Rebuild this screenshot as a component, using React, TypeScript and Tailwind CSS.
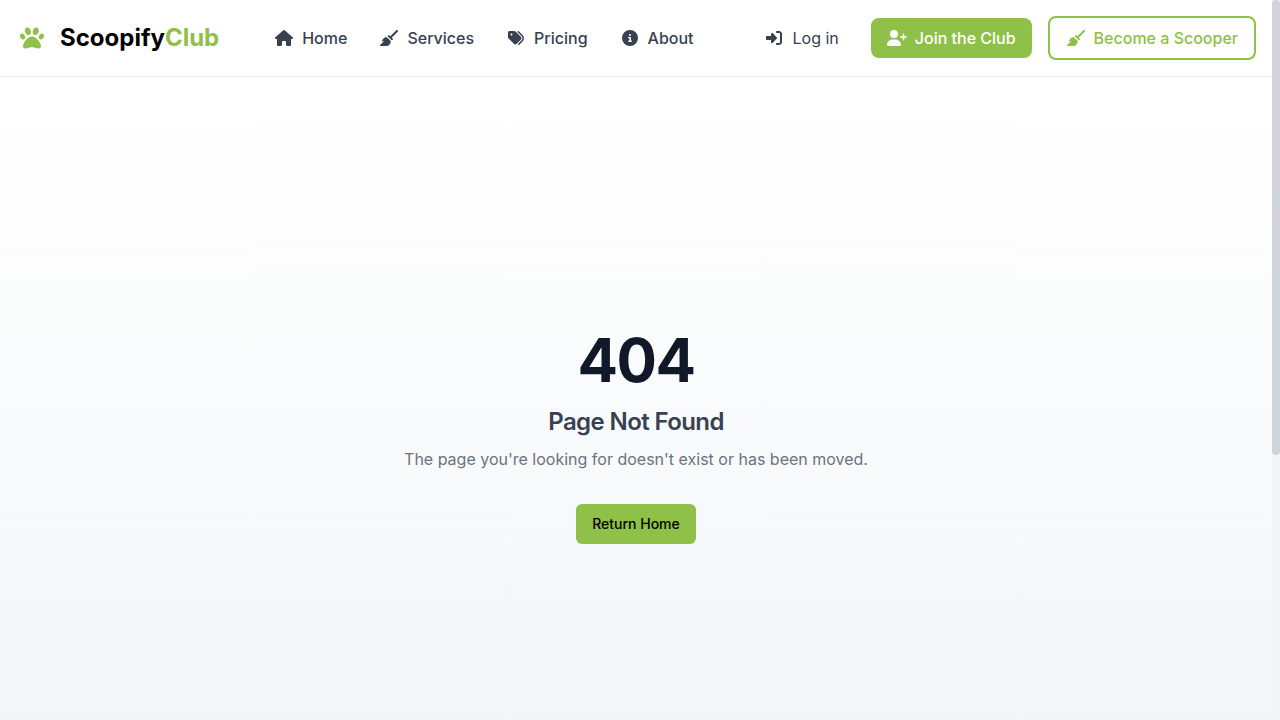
import type { ComponentType } from "react";
import {
  FaBroom,
  FaCircleInfo,
  FaHouse,
  FaPaw,
  FaRightToBracket,
  FaTags,
  FaUserPlus,
} from "react-icons/fa6";

type Icon = ComponentType<{ className?: string }>;

const navItems: { label: string; href: string; icon: Icon }[] = [
  { label: "Home", href: "/", icon: FaHouse },
  { label: "Services", href: "/services", icon: FaBroom },
  { label: "Pricing", href: "/pricing", icon: FaTags },
  { label: "About", href: "/about", icon: FaCircleInfo },
];

function FixedIcon({ icon: Glyph }: { icon: Icon }) {
  return (
    <span className="shrink-0" aria-hidden="true">
      <Glyph className="h-4 w-5" />
    </span>
  );
}

function Header() {
  return (
    <header className="flex items-center justify-between border-b border-gray-200 bg-white py-4 pr-4 pl-5">
      <a href="/" className="flex items-center gap-4 text-2xl font-bold text-black">
        <FaPaw className="size-6 text-[#8fc048]" aria-hidden="true" />
        <span>
          Scoopify<span className="text-[#8fc048]">Club</span>
        </span>
      </a>
      <nav className="flex items-center gap-8" aria-label="Main">
        {navItems.map(({ label, href, icon }) => (
          <a key={label} href={href} className="flex items-center gap-2 font-medium text-[#374151]">
            <FixedIcon icon={icon} />
            {label}
          </a>
        ))}
      </nav>
      <div className="flex items-center gap-4">
        <a href="/login" className="flex items-center gap-2 px-4 py-2 text-[#374151]">
          <FixedIcon icon={FaRightToBracket} />
          Log in
        </a>
        <a
          href="/join"
          className="flex items-center gap-2 rounded-lg bg-[#8fc048] px-4 py-2 font-medium text-white"
        >
          <FixedIcon icon={FaUserPlus} />
          Join the Club
        </a>
        <a
          href="/scooper"
          className="flex items-center gap-2 rounded-lg border-2 border-[#8fc048] px-4 py-2 font-medium text-[#8fc048]"
        >
          <FixedIcon icon={FaBroom} />
          Become a Scooper
        </a>
      </div>
    </header>
  );
}

export default function App() {
  return (
    <div className="flex h-screen overflow-hidden bg-white font-['Inter',sans-serif] text-base">
      <div className="min-w-0 flex-1">
        <Header />
        <main className="flex min-h-screen flex-col items-center justify-center bg-linear-to-b/srgb from-white via-[#f9fafb] to-[#f3f4f6] text-center">
          <h1 className="text-6xl font-bold tracking-tight text-[#111827]">404</h1>
          <h2 className="mt-4 text-2xl font-semibold tracking-tight text-[#374151]">Page Not Found</h2>
          <p className="mt-2 leading-[26px] text-[#6b7280]">
            The page you're looking for doesn't exist or has been moved.
          </p>
          <button
            type="button"
            className="mt-8 h-10 rounded-md bg-[#8fc048] px-4 text-sm font-medium text-black"
          >
            Return Home
          </button>
        </main>
      </div>
      <div className="w-2 shrink-0 bg-[#f3f4f6]" aria-hidden="true">
        <div className="h-[63.2%] rounded-full bg-[#d1d5db]" />
      </div>
    </div>
  );
}
